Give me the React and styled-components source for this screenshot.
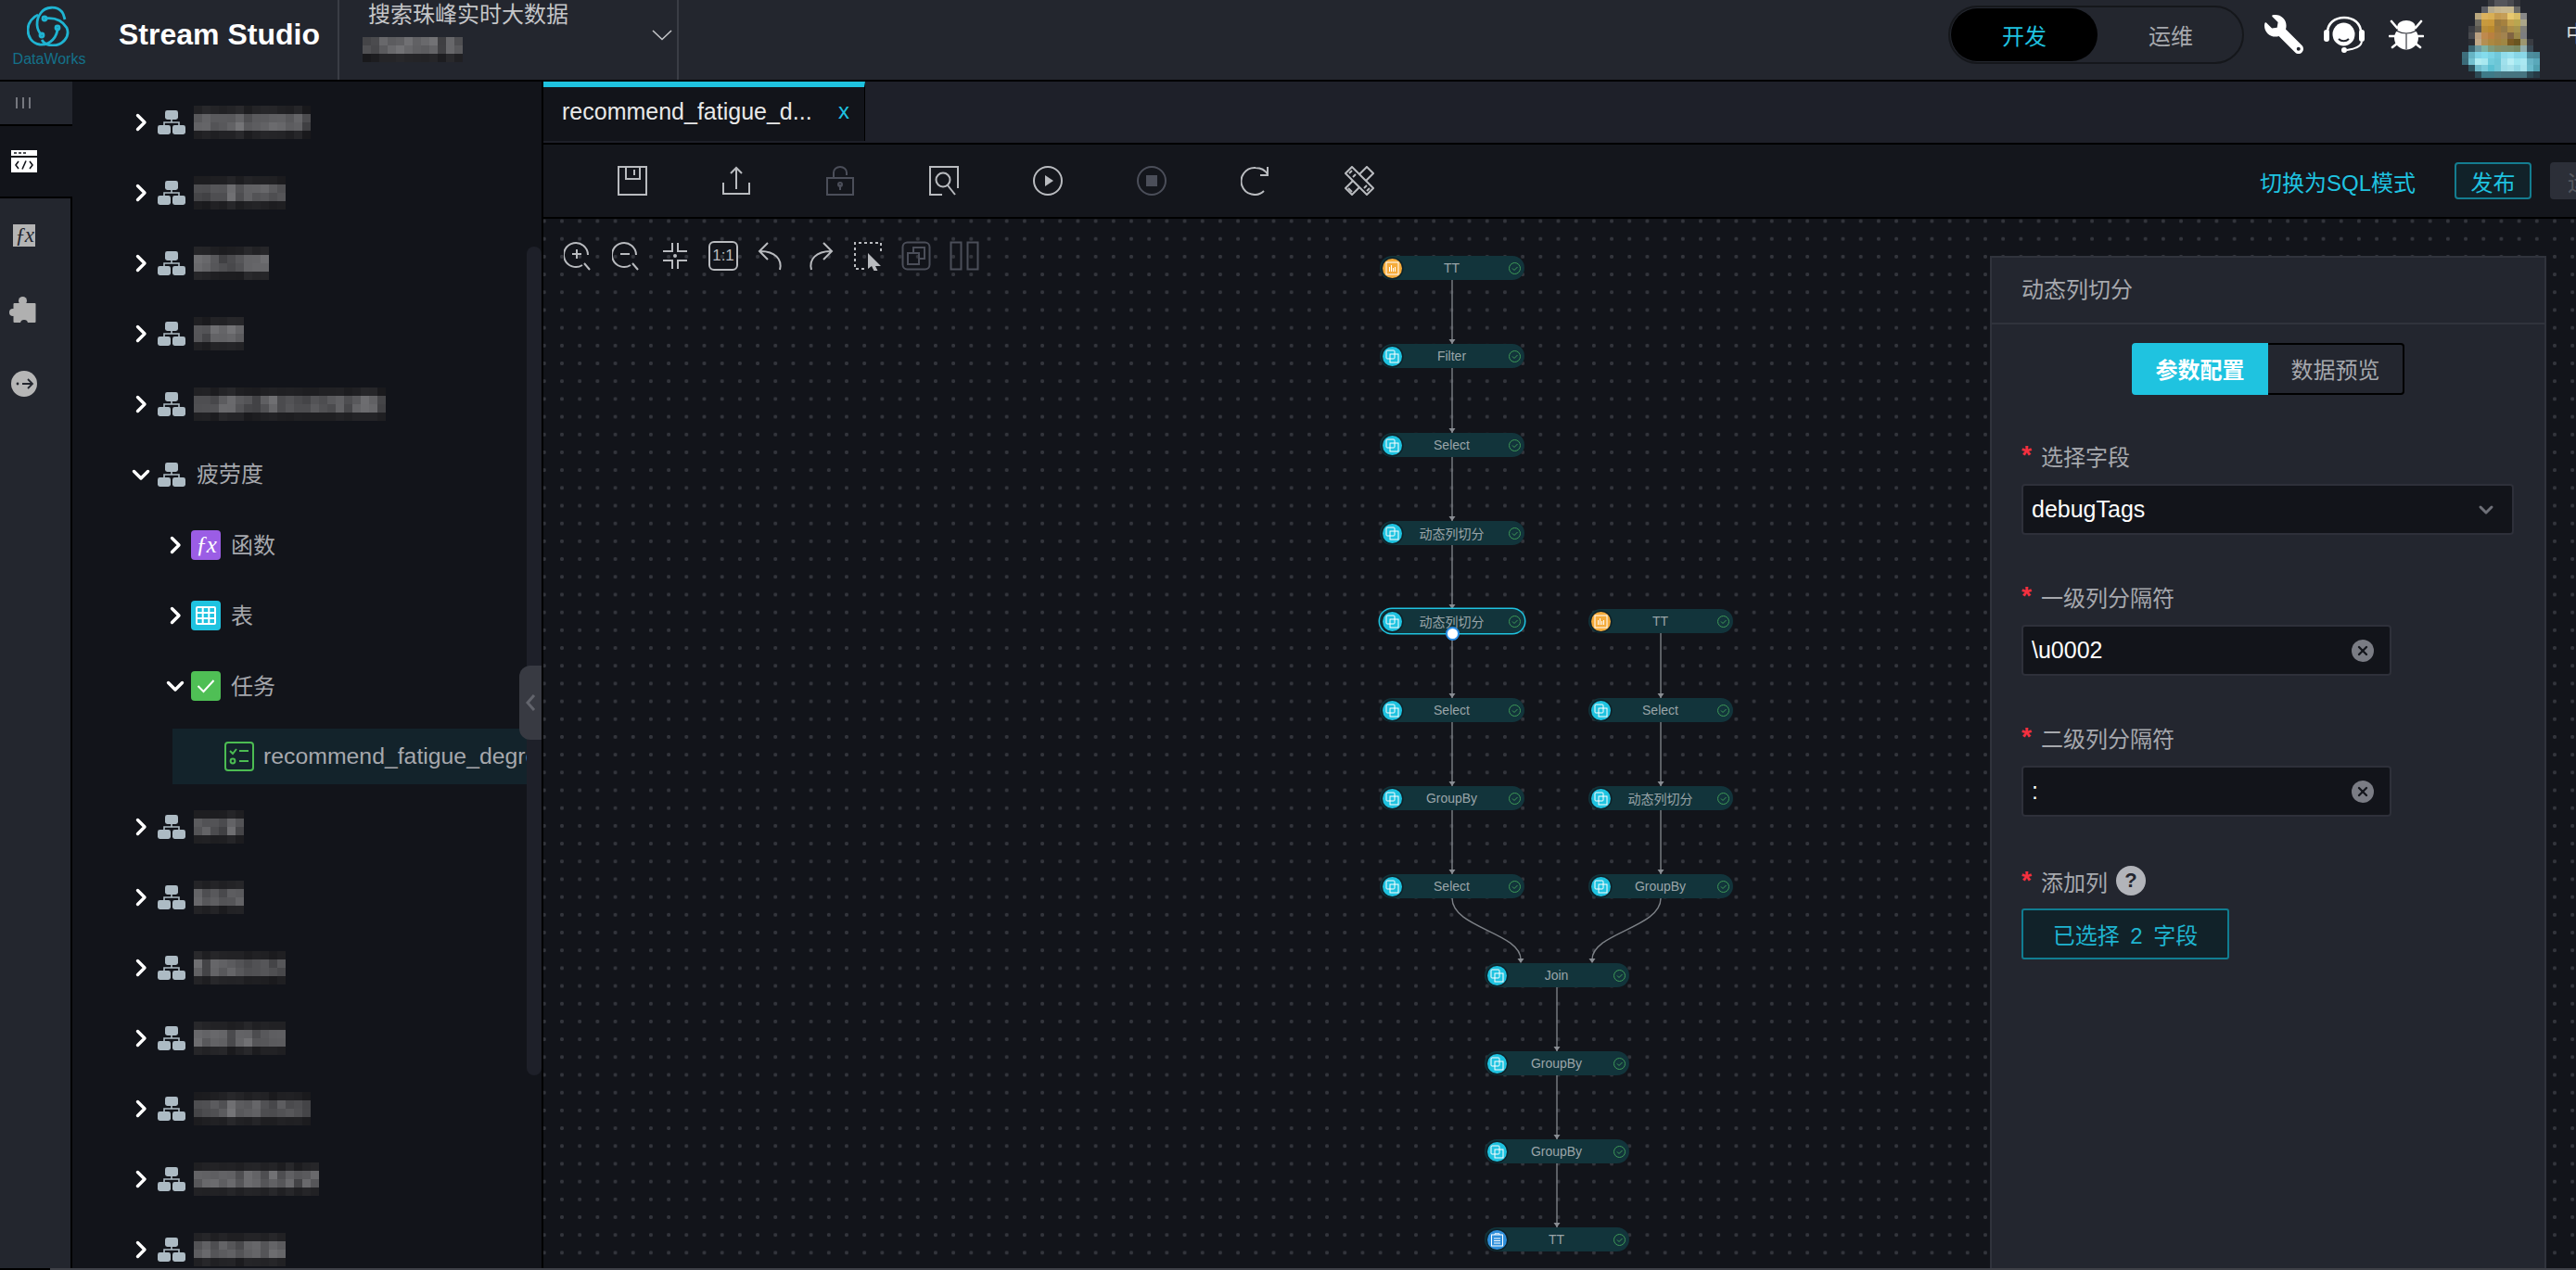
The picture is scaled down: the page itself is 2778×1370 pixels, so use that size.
import styled, { createGlobalStyle } from 'styled-components'
import { ChevronDown, X } from 'lucide-react'
import { FaWrench } from 'react-icons/fa'

const FONT = `"Liberation Sans", "Noto Sans CJK SC", sans-serif`
const CYAN = '#1fc3e0'
const TEXT = '#a6a8ad'

const GlobalStyle = createGlobalStyle`
  html, body {
    margin: 0;
    padding: 0;
    background: #000000;
    font-family: ${FONT};
    overflow: hidden;
  }
  * {
    box-sizing: border-box;
  }
`

const Page = styled.div`
  display: flex;
  flex-direction: column;
  width: 2778px;
  height: 1370px;
  background: #000000;
  overflow: hidden;
`

/* top bar */
const Header = styled.header`
  display: flex;
  flex: none;
  height: 88px;
  border-bottom: 2px solid #000000;
  background: #23262e;
`

const Brand = styled.div`
  display: flex;
  flex: none;
  flex-direction: column;
  align-items: center;
  gap: 5px;
  width: 128px;
  padding: 6px 22px 0 0;
`

const BrandName = styled.span`
  color: #14718a;
  font-size: 16px;
  line-height: 18px;
`

const Title = styled.h1`
  flex: none;
  width: 236px;
  margin: 0;
  color: #ffffff;
  font-size: 32px;
  font-weight: 700;
  line-height: 74px;
`

const Project = styled.div`
  display: flex;
  flex: none;
  align-items: flex-start;
  justify-content: space-between;
  width: 368px;
  padding: 0 5px 0 25px;
  border-right: 2px solid #3a3d45;
  border-left: 2px solid #3a3d45;
`

const ProjectName = styled.div`
  padding-left: 6px;
  color: #c4c5c8;
  font-size: 24px;
  line-height: 32px;
`

const ProjectSub = styled.div`
  margin-top: 8px;
`

const ProjectCaret = styled.svg`
  margin-top: 32px;
  fill: none;
  stroke: #c4c5c8;
  stroke-width: 1.6;
`

const ProjectBlur = styled.svg`
  display: block;
`

const HeaderRight = styled.div`
  display: flex;
  align-items: center;
  height: 74px;
  margin-left: auto;
`

const Mode = styled.div`
  display: flex;
  width: 319px;
  height: 63px;
  padding: 1px;
  border: 2px solid #15171b;
  border-radius: 32px;
`

const ModeItem = styled.div`
  display: flex;
  flex: ${(p) => (p.$active ? '0 0 158px' : '1')};
  align-items: center;
  justify-content: center;
  padding-left: ${(p) => (p.$active ? 0 : 3)}px;
  border-radius: 29px;
  background: ${(p) => (p.$active ? '#000000' : 'transparent')};
  color: ${(p) => (p.$active ? CYAN : TEXT)};
  font-size: 24px;
`

const HeaderTool = styled.span`
  display: flex;
  margin-left: ${(p) => p.$gap}px;
  color: #ffffff;
`

const WrenchIcon = styled(FaWrench)`
  transform: scaleX(-1);
`

const HeaderGlyph = styled.svg`
  display: block;
`

const Avatar = styled.svg`
  flex: none;
  align-self: flex-start;
  margin-left: 41px;
`

const Lang = styled.span`
  flex: none;
  width: 11px;
  margin-left: 28px;
  overflow: hidden;
  color: #d8d8d8;
  font-size: 24px;
  line-height: 30px;
  white-space: nowrap;
`

/* body */
const Body = styled.div`
  display: flex;
  flex: 1;
  min-height: 0;
`

const Rail = styled.nav`
  display: flex;
  flex: none;
  flex-direction: column;
  width: 78px;
`

const RailTop = styled.div`
  display: flex;
  align-items: center;
  height: 48px;
  padding-left: 17px;
  border-bottom: 2px solid #000000;
  background: #23262e;
`

const RailBars = styled.svg`
  stroke: #8a8d93;
  stroke-width: 1.6;
`

const RailActive = styled.div`
  display: flex;
  align-items: center;
  height: 78px;
  padding-left: 12px;
  border-bottom: 2px solid #000000;
  background: #12141a;
`

const RailRest = styled.div`
  flex: 1;
  border-right: 2px solid #000000;
  background: #23262e;
`

const RailItem = styled.div`
  display: flex;
  align-items: center;
  height: 80px;
  padding-left: ${(p) => p.$pad}px;
  color: #b0b0b0;
`

const FxBadge = styled.span`
  display: flex;
  align-items: center;
  justify-content: center;
  width: ${(p) => p.$size}px;
  height: ${(p) => p.$size}px;
  border-radius: ${(p) => (p.$color ? 4 : 0)}px;
  background: ${(p) => p.$color || '#b4b4b4'};
  color: ${(p) => (p.$color ? '#ffffff' : '#23262e')};
  font-family: "Liberation Serif", serif;
  font-size: ${(p) => (p.$color ? 25 : 23)}px;
  font-style: italic;
  letter-spacing: -1px;
`

/* tree */
const Tree = styled.aside`
  position: relative;
  flex: none;
  width: 508px;
  padding-top: 6px;
  border-right: 2px solid #000000;
  background: #12141a;
  overflow: hidden;
`

const Row = styled.div`
  display: flex;
  align-items: center;
  height: 76px;
  padding-left: ${(p) => (p.$depth ? 101 : 64)}px;
`

const Caret = styled.svg`
  flex: none;
  fill: none;
  stroke: #ffffff;
  stroke-width: 3.4;
  stroke-linecap: round;
  stroke-linejoin: round;
  transform: rotate(${(p) => (p.$open ? 90 : 0)}deg);
`

const OrgIcon = styled.svg`
  flex: none;
  margin-left: 8px;
`

const TypeIcon = styled.span`
  display: flex;
  flex: none;
  align-items: center;
  justify-content: center;
  width: 32px;
  height: 32px;
  margin-left: 7px;
  border-radius: 4px;
  background: ${(p) => p.$color};
`

const FxSlot = styled.span`
  flex: none;
  margin-left: 7px;
`

const RowLabel = styled.span`
  margin-left: ${(p) => (p.$depth ? 11 : 12)}px;
  padding-bottom: ${(p) => (p.$depth ? 3 : 5)}px;
  color: ${TEXT};
  font-size: 24px;
`

const RowBlur = styled.svg`
  display: block;
  flex: none;
  margin-left: 9px;
`

const FileRow = styled.div`
  display: flex;
  align-items: center;
  height: 60px;
  margin: 8px 0 8px 108px;
  padding-left: 56px;
  background: #13232b;
  white-space: nowrap;
`

const FileIcon = styled.svg`
  flex: none;
  fill: none;
  stroke: #4cbc52;
  stroke-width: 2;
`

const FileName = styled.span`
  margin-left: 10px;
  color: ${TEXT};
  font-size: 24.8px;
`

const ScrollThumb = styled.div`
  position: absolute;
  top: 178px;
  right: 0;
  width: 16px;
  height: 894px;
  border-radius: 8px;
  background: #1e2029;
`

const CollapseHandle = styled.div`
  position: absolute;
  top: 630px;
  right: 0;
  display: flex;
  align-items: center;
  justify-content: center;
  width: 24px;
  height: 80px;
  border-radius: 12px 0 0 12px;
  background: #383a42;
  color: #62646c;
`

/* main */
const Main = styled.main`
  display: flex;
  flex: 1;
  flex-direction: column;
  min-width: 0;
`

const TabBar = styled.div`
  display: flex;
  flex: none;
  height: 68px;
  border-bottom: 2px solid #000000;
  background: #1e2029;
`

const Tab = styled.div`
  display: flex;
  align-items: center;
  justify-content: space-between;
  width: 347px;
  height: 64px;
  padding: 0 16px 6px 20px;
  border-top: 6px solid ${CYAN};
  border-right: 1px solid #000000;
  background: #12141a;
  color: #e8e8e8;
  font-size: 25px;
`

const TabClose = styled.span`
  color: ${CYAN};
  font-size: 24px;
`

const Toolbar = styled.div`
  display: flex;
  flex: none;
  align-items: center;
  height: 80px;
  padding-left: 40px;
  border-bottom: 2px solid #000000;
  background: #14161c;
`

const ToolSlot = styled.span`
  display: flex;
  justify-content: center;
  width: 112px;
`

const Icon = styled.svg`
  display: block;
  flex: none;
  fill: none;
  stroke: ${(p) => (p.$off ? '#4b4e59' : '#b9bbbf')};
  stroke-width: 2;
`

const ToolbarRight = styled.div`
  display: flex;
  align-items: center;
  margin-left: auto;
`

const SqlLink = styled.span`
  margin-right: 42px;
  color: ${CYAN};
  font-size: 24px;
`

const Publish = styled.button`
  width: 83px;
  height: 40px;
  padding: 0;
  border: 2px solid #147d90;
  border-radius: 4px;
  background: #112229;
  color: ${CYAN};
  font-family: ${FONT};
  font-size: 24px;
`

const Disabled = styled.button`
  width: 28px;
  height: 40px;
  margin-left: 20px;
  padding: 0 0 0 19px;
  border: 0;
  border-radius: 4px 0 0 4px;
  background: #2c2f38;
  color: #55575e;
  font-family: ${FONT};
  font-size: 24px;
  overflow: hidden;
  white-space: nowrap;
  text-align: left;
`

const Canvas = styled.section`
  position: relative;
  flex: 1;
  min-height: 0;
  background-color: #12141a;
  background-image: radial-gradient(circle at center, #33353c 1.8px, transparent 2.3px);
  background-position: 10.4px -7.1px;
  background-size: 19.2px 19.2px;
  overflow: hidden;
`

const CanvasTools = styled.div`
  display: flex;
  gap: 20px;
  padding: 24px 0 0 22px;
`

const OneToOne = styled.span`
  display: flex;
  align-items: center;
  justify-content: center;
  width: 32px;
  height: 32px;
  border: 2.5px solid #b9bbbf;
  border-radius: 6px;
  color: #b9bbbf;
  font-size: 17px;
  font-weight: 400;
`

const Edges = styled.svg`
  position: absolute;
  top: 0;
  left: 0;
  fill: none;
  stroke: #7c8086;
  stroke-width: 1.4;
`

const Arrow = styled.polygon`
  fill: #8a8e94;
  stroke: none;
`

const GraphNode = styled.div`
  position: absolute;
  top: ${(p) => p.$cy - 13}px;
  left: ${(p) => p.$cx - 78}px;
  display: grid;
  grid-template-columns: 1fr auto 1fr;
  align-items: center;
  width: 156px;
  height: 26px;
  padding: 0 4px 0 3px;
  border-radius: 13px;
  background: #12343b;
  box-shadow: ${(p) => (p.$selected ? `0 0 0 1.5px ${CYAN}` : 'none')};
  color: #9aa5a9;
  font-size: 14px;
`

const NodeBadge = styled.span`
  display: flex;
  align-items: center;
  justify-content: center;
  width: 21px;
  height: 21px;
  border-radius: 50%;
  background: ${(p) => p.$color};
  box-shadow: 0 0 0 1.5px #0e2229;
`

const NodeGlyph = styled.svg`
  fill: none;
  stroke: #ffffff;
  stroke-width: 1;
`

const NodeCheck = styled.svg`
  justify-self: end;
  fill: none;
  stroke: #3f9a58;
  stroke-width: 1;
`

const Port = styled.span`
  position: absolute;
  bottom: -8px;
  left: 71px;
  width: 15px;
  height: 15px;
  border: 2px solid #2a8fe8;
  border-radius: 50%;
  background: #ffffff;
`

/* config panel */
const Panel = styled.aside`
  position: absolute;
  top: 40px;
  left: 1560px;
  width: 600px;
  height: 1140px;
  border: 2px solid #30333c;
  background: #23262f;
`

const PanelTitle = styled.div`
  height: 72px;
  padding-left: 32px;
  border-bottom: 2px solid #30333c;
  color: ${TEXT};
  font-size: 24px;
  line-height: 70px;
`

const PanelTabs = styled.div`
  display: flex;
  justify-content: center;
  margin-top: 20px;
`

const PanelTab = styled.div`
  display: flex;
  align-items: center;
  justify-content: center;
  width: 147px;
  height: 56px;
  padding-bottom: 2px;
  border: ${(p) => (p.$active ? '0' : '2px solid #000000')};
  border-left: 0;
  border-radius: ${(p) => (p.$active ? '4px 0 0 4px' : '0 4px 4px 0')};
  background: ${(p) => (p.$active ? CYAN : 'transparent')};
  color: ${(p) => (p.$active ? '#ffffff' : TEXT)};
  font-size: 24px;
  font-weight: ${(p) => (p.$active ? 700 : 400)};
`

const Form = styled.div`
  display: flex;
  flex-direction: column;
  gap: 51px;
  padding: 50px 32px 0;
`

const Field = styled.div`
  display: flex;
  flex-direction: column;
  align-items: flex-start;
  gap: ${(p) => (p.$tight ? 11 : 12)}px;
  margin-top: ${(p) => (p.$tight ? 3 : 0)}px;
`

const Label = styled.label`
  display: flex;
  align-items: center;
  gap: 9px;
  height: 34px;
  padding-bottom: 4px;
  color: ${TEXT};
  font-size: 24px;
`

const Star = styled.span`
  width: 12px;
  color: #f5303f;
  font-size: 28px;
  font-weight: 700;
  line-height: 28px;
`

const Help = styled.span`
  display: flex;
  align-items: center;
  justify-content: center;
  width: 32px;
  height: 32px;
  margin-left: 0;
  border-radius: 50%;
  background: #b2b4ba;
  color: #23262f;
  font-size: 22px;
  font-weight: 700;
`

const InputBox = styled.div`
  display: flex;
  align-items: center;
  justify-content: space-between;
  width: ${(p) => p.$width}px;
  height: 55px;
  padding: 0 17px 0 9px;
  border: 2px solid #2e303a;
  border-radius: 4px;
  background: #12141a;
  color: #ffffff;
  font-size: 25px;
`

const ClearIcon = styled.span`
  display: flex;
  align-items: center;
  justify-content: center;
  width: 24px;
  height: 24px;
  border-radius: 50%;
  background: #7a7c84;
  color: #14161c;
`

const SelectCaret = styled(ChevronDown)`
  margin-right: -1px;
  color: #6e7078;
`

const PickButton = styled.button`
  width: 224px;
  height: 55px;
  padding: 0;
  border: 2px solid #107d91;
  border-radius: 3px;
  background: #112229;
  color: #1fb4d0;
  font-family: ${FONT};
  font-size: 24px;
  word-spacing: 5px;
`

const BottomLine = styled.div`
  flex: none;
  height: 2px;
  margin-left: 54px;
  background: #3f4148;
`

/* data */
const COL_A = 980
const COL_B = 1205
const COL_C = 1093

const NODES = [
  { cx: COL_A, cy: 53, label: 'TT', kind: 'source' },
  { cx: COL_A, cy: 148, label: 'Filter' },
  { cx: COL_A, cy: 244, label: 'Select' },
  { cx: COL_A, cy: 339, label: '动态列切分' },
  { cx: COL_A, cy: 434, label: '动态列切分', selected: true },
  { cx: COL_A, cy: 530, label: 'Select' },
  { cx: COL_A, cy: 625, label: 'GroupBy' },
  { cx: COL_A, cy: 720, label: 'Select' },
  { cx: COL_B, cy: 434, label: 'TT', kind: 'source' },
  { cx: COL_B, cy: 530, label: 'Select' },
  { cx: COL_B, cy: 625, label: '动态列切分' },
  { cx: COL_B, cy: 720, label: 'GroupBy' },
  { cx: COL_C, cy: 816, label: 'Join' },
  { cx: COL_C, cy: 911, label: 'GroupBy' },
  { cx: COL_C, cy: 1006, label: 'GroupBy' },
  { cx: COL_C, cy: 1101, label: 'TT', kind: 'sink' },
]

const LINKS = [
  [0, 1], [1, 2], [2, 3], [3, 4], [4, 5], [5, 6], [6, 7],
  [8, 9], [9, 10], [10, 11], [12, 13], [13, 14], [14, 15],
]

const TREE_TOP = [
  { cols: 14, seed: 3 },
  { cols: 11, seed: 7 },
  { cols: 9, seed: 11 },
  { cols: 6, seed: 17 },
  { cols: 23, seed: 23 },
]

const TREE_BOTTOM = [
  { cols: 6, seed: 29 },
  { cols: 6, seed: 31 },
  { cols: 11, seed: 37 },
  { cols: 11, seed: 41 },
  { cols: 14, seed: 43 },
  { cols: 15, seed: 47 },
  { cols: 11, seed: 53 },
]

const AVATAR = [
  ['', '', '', '', '#3a3c42', '#55565b', '#55565b', '#4a4b50', '#33353b', '', '', ''],
  ['', '', '', '#5d5f65', '#b5aa8e', '#c4b48e', '#c8b890', '#c7b88f', '#6b6a66', '', '', ''],
  ['', '', '#b8a67e', '#dcb25e', '#d9af55', '#c49a4f', '#c59e58', '#e8c86e', '#d8bc66', '#888888', '', ''],
  ['', '', '#6d6a60', '#c79a3e', '#c9983a', '#9a7a3f', '#a5813f', '#c4a24e', '#b9a650', '#aca68a', '', ''],
  ['', '#3b3d43', '#5a5750', '#b88d3a', '#b98a2e', '#a17c3e', '#947a48', '#ac8d47', '#a5934e', '#81807a', '', ''],
  ['', '#47494e', '#b9a081', '#bf8a4e', '#ba8040', '#a88044', '#a2834f', '#806442', '#9a8748', '#7d7e80', '', ''],
  ['', '#2b2d33', '#c0a887', '#b48f52', '#ac8840', '#a4823f', '#9f8744', '#7a5a22', '#6a5520', '#9d9770', '#3a3c42', ''],
  ['', '#3b6470', '#6d9aa0', '#7db3a5', '#7e9a7c', '#83906a', '#808f6e', '#7d8f6c', '#788862', '#91aeae', '#3a4a55', ''],
  ['#3e6e7c', '#66b4c4', '#80d4e6', '#84dcec', '#7ad3e4', '#70c8da', '#90dceb', '#98e2f0', '#88d6e6', '#8ad8e8', '#4f8e9e', '#4a8a9a'],
  ['#3b6a78', '#74c0cf', '#b0ecf2', '#a8e8f0', '#72ccdc', '#6cc6d6', '#a0e0ec', '#b8eef5', '#a0e6f0', '#aae8f2', '#68b4c6', '#5aa8ba'],
  ['', '#2f5560', '#70bccc', '#7cccdc', '#5cc0d2', '#70c6d6', '#9cdce8', '#a4e0ea', '#90d6e4', '#a8e4ee', '#6abacb', '#50a0b0'],
  ['', '', '#2c4a55', '#3e7a88', '#3e7a88', '#467884', '#467480', '#467480', '#467480', '#467480', '#2d4a55', '#263a45'],
]

/* drawings */
function Logo() {
  return (
    <svg width="48" height="44" viewBox="0 0 48 44" fill="none" stroke="#1fb4d2" strokeWidth="2.8">
      <path d="M19 14C27 13 37 14 43 24C47 34 38 43 28 43C22 43 18 40 16 37" />
      <path d="M33 24C33 33 26 43 14 42C5 41 1 33 1 26C1 18 7 12 12 10" />
      <path d="M16 32C10 26 9 16 15 8C20 1 32 0 38 7C40 10 40 12 41 15" />
      <circle cx="19" cy="14" r="2" />
      <circle cx="33" cy="24" r="2" />
      <circle cx="16" cy="32" r="2" />
    </svg>
  )
}

function Headset() {
  return (
    <HeaderGlyph width="44" height="40" viewBox="0 0 44 40">
      <path d="M4 18C4 8 12 2 22 2C32 2 40 8 40 18" fill="none" stroke="#fff" strokeWidth="2.6" />
      <ellipse cx="21.5" cy="20" rx="12" ry="12.5" fill="#fff" />
      <path d="M16 25C19 28 24 28 27 25" fill="none" stroke="#23262e" strokeWidth="2" />
      <rect x="0" y="15" width="6" height="13" rx="3" fill="#fff" />
      <rect x="38" y="15" width="6" height="13" rx="3" fill="#fff" />
      <path d="M41 28C40 33 33 36 25 37" fill="none" stroke="#fff" strokeWidth="2" />
      <circle cx="22" cy="37" r="3" fill="#fff" />
    </HeaderGlyph>
  )
}

function Bug() {
  return (
    <HeaderGlyph width="38" height="34" viewBox="0 0 38 34">
      <path
        d="M3 3L9 10M35 3L29 10M1 19H7M37 19H31M4 31L9 27M34 31L29 27"
        fill="none"
        stroke="#fff"
        strokeWidth="2.6"
        strokeLinecap="round"
      />
      <ellipse cx="19" cy="9" rx="10" ry="7" fill="#fff" />
      <ellipse cx="19" cy="21" rx="13" ry="12.5" fill="#fff" />
      <path d="M8 13Q19 19 30 13" fill="none" stroke="#23262e" strokeWidth="1.2" />
      <path d="M19 16V33" stroke="#6a6c72" strokeWidth="1.6" />
    </HeaderGlyph>
  )
}

function Puzzle() {
  return (
    <svg width="29" height="28" viewBox="0 0 29 28" fill="#b0b0b0">
      <circle cx="14.5" cy="4.5" r="4.5" />
      <rect x="4.5" y="7" width="24" height="21" rx="1" />
      <circle cx="4" cy="17" r="4" />
      <circle cx="16" cy="29" r="4" fill="#23262e" />
    </svg>
  )
}

function pseudo(seed, r, c) {
  const x = Math.sin(seed * 12.9898 + r * 78.233 + c * 37.719) * 43758.5453
  return x - Math.floor(x)
}

function BlurText({ cols, rows = 4, seed, as: Comp = RowBlur }) {
  const cells = []
  for (let r = 0; r < rows; r++) {
    for (let c = 0; c < cols; c++) {
      const edge = rows > 3 ? r === 0 || r === rows - 1 : r === rows - 1
      const n = pseudo(seed, 0, c) * 0.65 + pseudo(seed, r + 1, c) * 0.35
      const v = Math.round(edge ? 24 + n * 18 : 60 + n * 58)
      cells.push(
        <rect key={`${r}-${c}`} x={c * 9} y={r * 9} width="9" height="9" fill={`rgb(${v},${v},${v + 3})`} />
      )
    }
  }
  return (
    <Comp width={cols * 9} height={rows * 9} shapeRendering="crispEdges">
      {cells}
    </Comp>
  )
}

function OrgGlyph() {
  return (
    <OrgIcon width="30" height="26" viewBox="0 0 30 26" fill="#adbbc4">
      <rect x="8" y="0" width="14" height="10" rx="2.4" />
      <rect x="0" y="16" width="14" height="10" rx="2.4" />
      <rect x="16" y="16" width="14" height="10" rx="2.4" />
      <path d="M15 10v3M7 16v-3h16v3" fill="none" stroke="#adbbc4" strokeWidth="1.6" />
    </OrgIcon>
  )
}

function TreeCaret({ open }) {
  return (
    <Caret $open={open} width="20" height="20" viewBox="0 0 20 20">
      <path d="M6.5 2.5L14 10L6.5 17.5" />
    </Caret>
  )
}

function NodeIcon({ kind }) {
  if (kind === 'source') {
    return (
      <NodeBadge $color="#f5ac3c">
        <NodeGlyph width="15" height="15" viewBox="0 0 15 15">
          <rect x="1" y="1" width="13" height="13" />
          <path d="M4.5 11V6M6.5 11V4M8.5 11V7M10.5 11V6" />
        </NodeGlyph>
      </NodeBadge>
    )
  }
  if (kind === 'sink') {
    return (
      <NodeBadge $color="#2f8fdb">
        <NodeGlyph width="15" height="15" viewBox="0 0 15 15">
          <rect x="1.5" y="2" width="12" height="12" />
          <path d="M5 2V0.8H10V2M4 6H11M4 8.5H11M4 11H11" />
        </NodeGlyph>
      </NodeBadge>
    )
  }
  return (
    <NodeBadge $color={CYAN}>
      <NodeGlyph width="15" height="15" viewBox="0 0 15 15">
        <rect x="1" y="1" width="9" height="9" rx="1" />
        <rect x="5" y="5" width="9" height="9" />
      </NodeGlyph>
    </NodeBadge>
  )
}

function Node({ cx, cy, label, kind, selected }) {
  return (
    <GraphNode $cx={cx} $cy={cy} $selected={selected}>
      <NodeIcon kind={kind} />
      <span>{label}</span>
      <NodeCheck width="13" height="13" viewBox="0 0 13 13">
        <circle cx="6.5" cy="6.5" r="6" />
        <path d="M4 6.5L6 8.5L9.5 5" />
      </NodeCheck>
      {selected && <Port />}
    </GraphNode>
  )
}

function arrowPoints(x, y) {
  return `${x - 3.5},${y - 5} ${x + 3.5},${y - 5} ${x},${y}`
}

function GraphEdges() {
  const joinTop = 803
  const bottom = 733
  return (
    <Edges width="2192" height="1132">
      {LINKS.map(([from, to]) => {
        const a = NODES[from]
        const b = NODES[to]
        return (
          <g key={`${from}-${to}`}>
            <path d={`M${a.cx} ${a.cy + 13}V${b.cy - 13}`} />
            <Arrow points={arrowPoints(b.cx, b.cy - 13)} />
          </g>
        )
      })}
      <path d={`M${COL_A} ${bottom}C${COL_A} 765 1054 770 1054 ${joinTop - 4}`} />
      <Arrow points={arrowPoints(1054, joinTop)} />
      <path d={`M${COL_B} ${bottom}C${COL_B} 765 1131 770 1131 ${joinTop - 4}`} />
      <Arrow points={arrowPoints(1131, joinTop)} />
    </Edges>
  )
}

function ToolbarIcons() {
  return (
    <>
      <ToolSlot>
        <Icon width="32" height="32" viewBox="0 0 32 32">
          <rect x="1" y="1" width="30" height="30" />
          <path d="M9 1V14H24V1M18 4V10" />
        </Icon>
      </ToolSlot>
      <ToolSlot>
        <Icon width="32" height="32" viewBox="0 0 32 32">
          <path d="M2 18V30H30V18M16 25V2M10 8L16 2L22 8" />
        </Icon>
      </ToolSlot>
      <ToolSlot>
        <Icon $off width="32" height="32" viewBox="0 0 32 32">
          <rect x="2" y="13" width="28" height="18" />
          <path d="M9 13V7A7 6 0 0 1 23 7V10M16 20V26" />
          <circle cx="16" cy="20" r="2" />
        </Icon>
      </ToolSlot>
      <ToolSlot>
        <Icon width="32" height="32" viewBox="0 0 32 32">
          <path d="M31 24V1H1V31H14" />
          <circle cx="15" cy="15" r="7.5" />
          <path d="M20 21L28 31" />
        </Icon>
      </ToolSlot>
      <ToolSlot>
        <Icon width="32" height="32" viewBox="0 0 32 32">
          <circle cx="16" cy="16" r="15" />
          <polygon points="13,10 22,16 13,22" fill="#b9bbbf" stroke="none" />
        </Icon>
      </ToolSlot>
      <ToolSlot>
        <Icon $off width="32" height="32" viewBox="0 0 32 32">
          <circle cx="16" cy="16" r="15" />
          <rect x="10" y="10" width="12" height="12" fill="#4b4e59" stroke="none" />
        </Icon>
      </ToolSlot>
      <ToolSlot>
        <Icon width="32" height="32" viewBox="0 0 32 32">
          <path d="M25 27A14.5 14.5 0 1 1 16 2C21 2 26 4 29 9M29 1V10H21" />
        </Icon>
      </ToolSlot>
      <ToolSlot>
        <Icon width="32" height="32" viewBox="0 0 32 32">
          <path d="M8 1L1 8L24 31L31 24Z" />
          <path d="M16 9L24 1L31 8L23 16M9 16L1 24L8 31L16 23" />
          <path d="M5 8L8 5M9 12L12 9M21 24L24 21M24 27L27 24M4 24L8 28" />
        </Icon>
      </ToolSlot>
    </>
  )
}

function CanvasIcons() {
  return (
    <CanvasTools>
      <Icon width="32" height="32" viewBox="0 0 32 32">
        <path d="M20 26A13 13 0 1 1 26 15M14 9V19M9 14H19M22 24L28 31" />
      </Icon>
      <Icon width="32" height="32" viewBox="0 0 32 32">
        <path d="M20 26A13 13 0 1 1 26 15M9 14H19M22 24L28 31" />
      </Icon>
      <Icon width="32" height="32" viewBox="0 0 32 32">
        <path d="M13 2V11H3M19 2V11H29M13 30V21H3M19 30V21H29" />
        <circle cx="16" cy="16" r="2" fill="#b9bbbf" stroke="none" />
      </Icon>
      <OneToOne>1:1</OneToOne>
      <Icon width="32" height="32" viewBox="0 0 32 32">
        <path d="M25 31C28 20 20 11 4 11M12 2L3 11L12 20" />
      </Icon>
      <Icon width="32" height="32" viewBox="0 0 32 32">
        <path d="M7 31C4 20 12 11 28 11M20 2L29 11L20 20" />
      </Icon>
      <Icon width="32" height="32" viewBox="0 0 32 32">
        <path d="M12 30H2V2H30V12" strokeDasharray="3 3" />
        <polygon points="16,13 30,27 24,27 27,33 23,33 20,27 16,30" fill="#b9bbbf" stroke="none" />
      </Icon>
      <Icon $off width="32" height="32" viewBox="0 0 32 32">
        <rect x="1.5" y="1.5" width="29" height="29" rx="5" />
        <path d="M13 13V7H25V19H19M7 13H19V25H7Z" />
      </Icon>
      <Icon $off width="32" height="32" viewBox="0 0 32 32">
        <rect x="1.5" y="1.5" width="11" height="29" />
        <rect x="19.5" y="1.5" width="11" height="29" />
      </Icon>
    </CanvasTools>
  )
}

export default function App() {
  return (
    <Page>
      <GlobalStyle />
      <Header>
        <Brand>
          <Logo />
          <BrandName>DataWorks</BrandName>
        </Brand>
        <Title>Stream Studio</Title>
        <Project>
          <div>
            <ProjectName>搜索珠峰实时大数据</ProjectName>
            <ProjectSub>
              <BlurText cols={12} rows={3} seed={61} as={ProjectBlur} />
            </ProjectSub>
          </div>
          <ProjectCaret width="22" height="12" viewBox="0 0 22 12">
            <path d="M1 1L11 10.5L21 1" />
          </ProjectCaret>
        </Project>
        <HeaderRight>
          <Mode>
            <ModeItem $active>开发</ModeItem>
            <ModeItem>运维</ModeItem>
          </Mode>
          <HeaderTool $gap={22}>
            <WrenchIcon size={42} />
          </HeaderTool>
          <HeaderTool $gap={22}>
            <Headset />
          </HeaderTool>
          <HeaderTool $gap={26}>
            <Bug />
          </HeaderTool>
          <Avatar width="84" height="84" viewBox="0 0 84 84" shapeRendering="crispEdges">
            {AVATAR.flatMap((row, r) =>
              row.map((fill, c) =>
                fill ? <rect key={`${r}-${c}`} x={c * 7} y={r * 7} width="7" height="7" fill={fill} /> : null
              )
            )}
          </Avatar>
          <Lang>中</Lang>
        </HeaderRight>
      </Header>

      <Body>
        <Rail>
          <RailTop>
            <RailBars width="16" height="12" viewBox="0 0 16 12">
              <path d="M1 0V12M8 0V12M15 0V12" />
            </RailBars>
          </RailTop>
          <RailActive>
            <svg width="28" height="24" viewBox="0 0 28 24">
              <rect width="28" height="6" fill="#fff" />
              <path d="M3 3H6M8 3H11M13 3H16" stroke="#12141a" strokeWidth="1.6" />
              <rect y="8" width="28" height="16" fill="#fff" />
              <path d="M8 12L5 16L8 20M20 12L23 16L20 20M16 11.5L12 20.5" fill="none" stroke="#12141a" strokeWidth="1.6" />
            </svg>
          </RailActive>
          <RailRest>
            <RailItem $pad={14}>
              <FxBadge $size={24}>ƒx</FxBadge>
            </RailItem>
            <RailItem $pad={10}>
              <Puzzle />
            </RailItem>
            <RailItem $pad={12}>
              <svg width="28" height="28" viewBox="0 0 28 28">
                <circle cx="14" cy="14" r="14" fill="#b6b6b6" />
                <path d="M12 14H23M18 9L23 14L18 19" fill="none" stroke="#23262e" strokeWidth="1.8" />
                <circle cx="7" cy="14" r="1.4" fill="#23262e" />
              </svg>
            </RailItem>
          </RailRest>
        </Rail>

        <Tree>
          {TREE_TOP.map((item) => (
            <Row key={item.seed}>
              <TreeCaret />
              <OrgGlyph />
              <BlurText cols={item.cols} seed={item.seed} />
            </Row>
          ))}
          <Row>
            <TreeCaret open />
            <OrgGlyph />
            <RowLabel>疲劳度</RowLabel>
          </Row>
          <Row $depth={1}>
            <TreeCaret />
            <FxSlot>
              <FxBadge $size={32} $color="#9b5de5">ƒx</FxBadge>
            </FxSlot>
            <RowLabel $depth={1}>函数</RowLabel>
          </Row>
          <Row $depth={1}>
            <TreeCaret />
            <TypeIcon $color={CYAN}>
              <svg width="24" height="24" viewBox="0 0 24 24" fill="none" stroke="#fff" strokeWidth="2">
                <rect x="2" y="3" width="20" height="18" rx="1" />
                <path d="M8.7 3V21M15.3 3V21M2 9H22M2 15H22" />
              </svg>
            </TypeIcon>
            <RowLabel $depth={1}>表</RowLabel>
          </Row>
          <Row $depth={1}>
            <TreeCaret open />
            <TypeIcon $color="#4fbf55">
              <svg width="20" height="16" viewBox="0 0 20 16" fill="none" stroke="#fff" strokeWidth="2">
                <path d="M1.5 8L7.5 14L18.5 2" />
              </svg>
            </TypeIcon>
            <RowLabel $depth={1}>任务</RowLabel>
          </Row>
          <FileRow>
            <FileIcon width="32" height="32" viewBox="0 0 32 32">
              <rect x="1" y="1" width="30" height="30" rx="3" />
              <path d="M6 10L9 13L13 8M16 10H26M16 21H26" />
              <circle cx="9" cy="21" r="2.4" />
            </FileIcon>
            <FileName>recommend_fatigue_degree</FileName>
          </FileRow>
          {TREE_BOTTOM.map((item) => (
            <Row key={item.seed}>
              <TreeCaret />
              <OrgGlyph />
              <BlurText cols={item.cols} seed={item.seed} />
            </Row>
          ))}
          <ScrollThumb />
          <CollapseHandle>
            <svg width="12" height="20" viewBox="0 0 12 20" fill="none" stroke="currentColor" strokeWidth="3">
              <path d="M10 2L3 10L10 18" />
            </svg>
          </CollapseHandle>
        </Tree>

        <Main>
          <TabBar>
            <Tab>
              <span>recommend_fatigue_d...</span>
              <TabClose>x</TabClose>
            </Tab>
          </TabBar>
          <Toolbar>
            <ToolbarIcons />
            <ToolbarRight>
              <SqlLink>切换为SQL模式</SqlLink>
              <Publish>发布</Publish>
              <Disabled>运行</Disabled>
            </ToolbarRight>
          </Toolbar>
          <Canvas>
            <CanvasIcons />
            <GraphEdges />
            {NODES.map((node) => (
              <Node key={`${node.cx}-${node.cy}`} {...node} />
            ))}
            <Panel>
              <PanelTitle>动态列切分</PanelTitle>
              <PanelTabs>
                <PanelTab $active>参数配置</PanelTab>
                <PanelTab>数据预览</PanelTab>
              </PanelTabs>
              <Form>
                <Field>
                  <Label><Star>*</Star>选择字段</Label>
                  <InputBox $width={531}>
                    debugTags
                    <SelectCaret size={24} strokeWidth={3} />
                  </InputBox>
                </Field>
                <Field>
                  <Label><Star>*</Star>一级列分隔符</Label>
                  <InputBox $width={399}>
                    \u0002
                    <ClearIcon><X size={16} strokeWidth={3.5} /></ClearIcon>
                  </InputBox>
                </Field>
                <Field>
                  <Label><Star>*</Star>二级列分隔符</Label>
                  <InputBox $width={399}>
                    :
                    <ClearIcon><X size={16} strokeWidth={3.5} /></ClearIcon>
                  </InputBox>
                </Field>
                <Field $tight>
                  <Label><Star>*</Star>添加列<Help>?</Help></Label>
                  <PickButton>已选择 2 字段</PickButton>
                </Field>
              </Form>
            </Panel>
          </Canvas>
        </Main>
      </Body>
      <BottomLine />
    </Page>
  )
}
